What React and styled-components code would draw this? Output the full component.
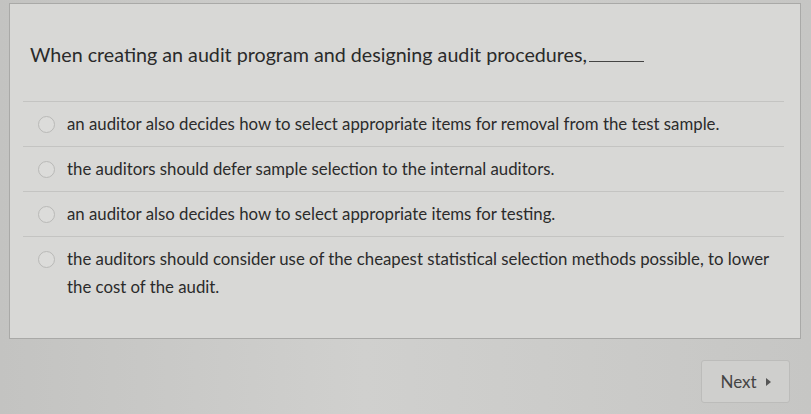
import React from 'react'
import styled, { createGlobalStyle } from 'styled-components'

const GlobalStyle = createGlobalStyle`
  html, body {
    margin: 0;
    padding: 0;
    background: linear-gradient(90deg, #c3c3c1 0%, #d0d0ce 45%, #c6c6c4 100%);
    font-family: Lato, "Open Sans", sans-serif;
    color: #333;
  }
  #root { min-height: 414px; }
`;

const Page = styled.div`
  display: flex;
  flex-direction: column;
  padding: 3px 10px 0 9px;
`;

const Card = styled.div`
  display: flex;
  flex-direction: column;
  background: #d8d8d6;
  border: 1px solid #a9a9a7;
  padding: 38px 16px 29px 13px;
`;

const Question = styled.div`
  font-size: 19.7px;
  line-height: 26px;
  color: #2a2a2a;
  padding-left: 7px;
  margin-bottom: 33px;
`;

const Blank = styled.span`
  display: inline-block;
  width: 55px;
  margin-left: 2px;
  border-bottom: 1px solid #444;
  vertical-align: baseline;
`;

const Options = styled.div`
  display: flex;
  flex-direction: column;
  border-top: 1px solid #c4c4c2;
`;

const Option = styled.label`
  display: flex;
  align-items: flex-start;
  gap: 12px;
  padding: 8px 12px 8px 15px;
  border-bottom: ${(p) => (p.last ? 'none' : '1px solid #c4c4c2')};
  font-size: 16.8px;
  line-height: 28px;
  color: #2b2b2b;
`;

const Radio = styled.span`
  flex: none;
  width: 15px;
  height: 15px;
  margin-top: 6px;
  border-radius: 50%;
  border: 1px solid #b9b9b7;
  background: #dcdcda;
`;

const Footer = styled.div`
  display: flex;
  justify-content: flex-end;
  padding: 21px 11px 0 0;
`;

const NextButton = styled.button`
  display: flex;
  align-items: center;
  gap: 9px;
  width: 89px;
  height: 43px;
  justify-content: center;
  background: #cfcfcd;
  border: 1px solid #bcbcba;
  border-radius: 3px;
  font-family: Lato, sans-serif;
  font-size: 17px;
  color: #444;
  cursor: pointer;
`;

const Arrow = styled.span`
  width: 0;
  height: 0;
  border-top: 4px solid transparent;
  border-bottom: 4px solid transparent;
  border-left: 5px solid #555;
`;

const options = [
  'an auditor also decides how to select appropriate items for removal from the test sample.',
  'the auditors should defer sample selection to the internal auditors.',
  'an auditor also decides how to select appropriate items for testing.',
  'the auditors should consider use of the cheapest statistical selection methods possible, to lower the cost of the audit.',
]

export default function App() {
  return (
    <Page>
      <GlobalStyle />
      <Card>
        <Question>
          When creating an audit program and designing audit procedures,<Blank />
        </Question>
        <Options>
          {options.map((text, i) => (
            <Option key={i} last={i === options.length - 1}>
              <Radio />
              <span>{text}</span>
            </Option>
          ))}
        </Options>
      </Card>
      <Footer>
        <NextButton>
          Next <Arrow />
        </NextButton>
      </Footer>
    </Page>
  )
}
